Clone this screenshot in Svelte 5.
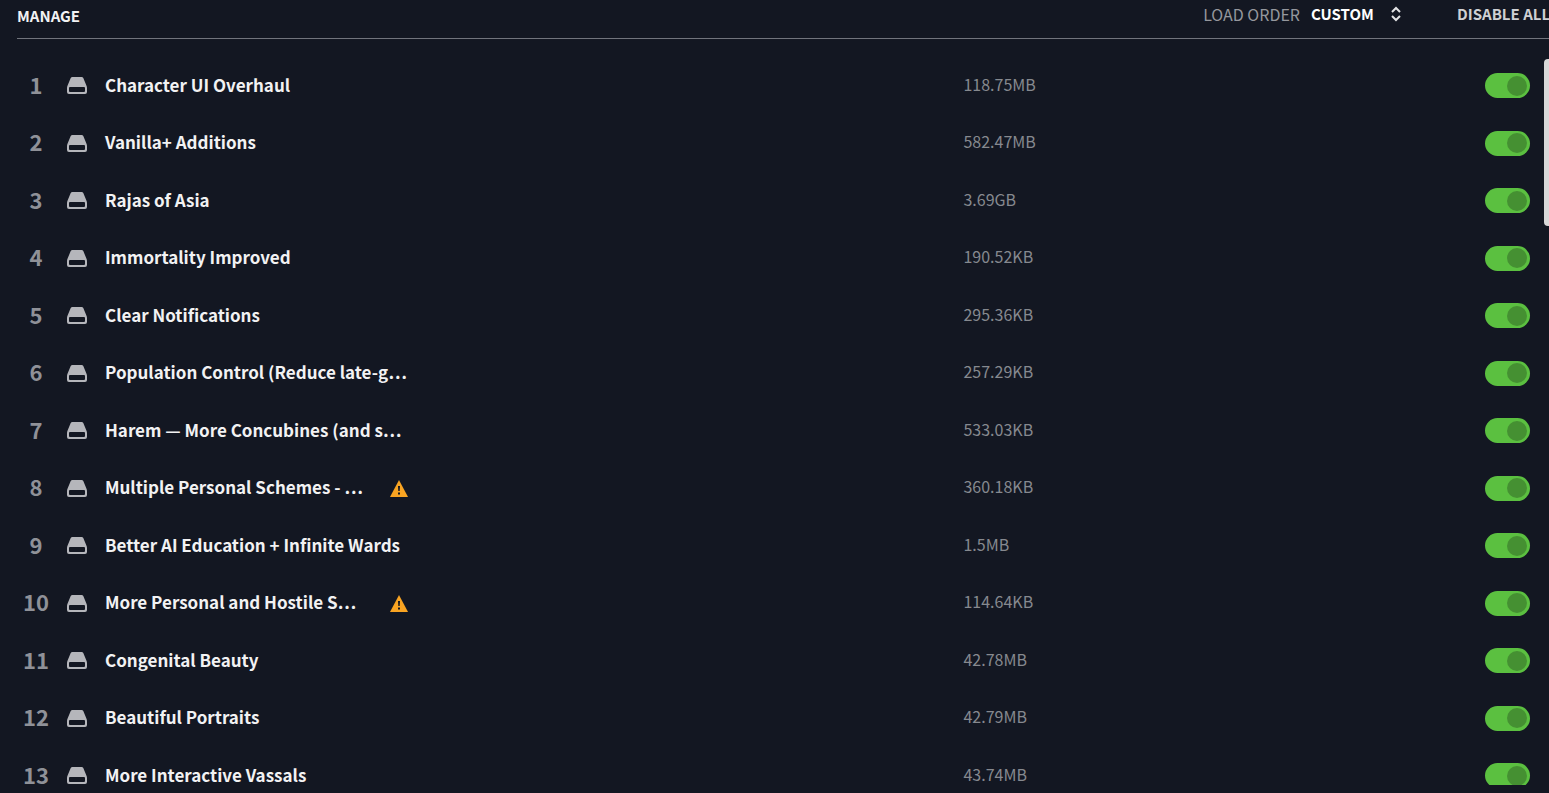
<script>
  let order = $state('CUSTOM');
  let mods = $state([
    { name: 'Character UI Overhaul', size: '118.75MB' },
    { name: 'Vanilla+ Additions', size: '582.47MB' },
    { name: 'Rajas of Asia', size: '3.69GB' },
    { name: 'Immortality Improved', size: '190.52KB' },
    { name: 'Clear Notifications', size: '295.36KB' },
    { name: 'Population Control (Reduce late-g…', size: '257.29KB' },
    { name: 'Harem — More Concubines (and s…', size: '533.03KB' },
    { name: 'Multiple Personal Schemes - …', size: '360.18KB', warning: true },
    { name: 'Better AI Education + Infinite Wards', size: '1.5MB' },
    { name: 'More Personal and Hostile S…', size: '114.64KB', warning: true },
    { name: 'Congenital Beauty', size: '42.78MB' },
    { name: 'Beautiful Portraits', size: '42.79MB' },
    { name: 'More Interactive Vassals', size: '43.74MB' }
  ].map((m) => ({ ...m, enabled: true })));

  function disableAll() {
    for (const m of mods) m.enabled = false;
  }
</script>

<main>
  <header>
    <h1>MANAGE</h1>
    <div class="order">
      <label for="load-order">LOAD ORDER</label>
      <select id="load-order" bind:value={order}>
        <option>CUSTOM</option>
      </select>
      <svg class="sort" viewBox="0 0 12 16" aria-hidden="true">
        <path d="M2 6 6 2l4 4M2 10l4 4 4-4" />
      </svg>
    </div>
    <button type="button" onclick={disableAll}>DISABLE ALL</button>
  </header>

  <div class="body">
    <ol>
      {#each mods as mod, i}
        <li>
          <span class="index">{i + 1}</span>
          <svg class="drive" viewBox="0 0 20 17" aria-hidden="true">
            <path fill-rule="evenodd" d="M5.400 0h9.200q1.200 0 1.700 1.100L19.400 8.500q.6 1.200.6 2.500V15q0 2-2 2H2q-2 0-2-2v-4q0-1.300.6-2.500L3.700 1.100Q4.200 0 5.400 0ZM3 10q-1 0-1 1v3q0 1 1 1h14q1 0 1-1v-3q0-1-1-1Z" />
          </svg>
          <div class="title">
            <label for="mod-{i}" class:flagged={mod.warning}>{mod.name}</label>
            {#if mod.warning}
              <svg class="warning" viewBox="0 0 18 17" role="img" aria-label="Warning">
                <path class="sign" d="M9 0 18 17H0Z" />
                <path class="mark" d="M8 6h2l-.3 5H8.300ZM8 12.500h2v2H8Z" />
              </svg>
            {/if}
          </div>
          <span class="size">{mod.size}</span>
          <input id="mod-{i}" type="checkbox" role="switch" bind:checked={mod.enabled} />
        </li>
      {/each}
    </ol>
    <div class="track"><div class="thumb"></div></div>
  </div>
</main>

<style>
  :global(body) {
    background: #131722;
  }
  main {
    box-sizing: border-box;
    height: 100vh;
    padding: 0 0 8px 17px;
    display: flex;
    flex-direction: column;
    overflow: hidden;
    color: #f2f2f3;
    font-family: "Noto Sans CJK SC", "Noto Sans", sans-serif;
    font-size: 16px;
    line-height: 24px;
  }
  header {
    flex: none;
    box-sizing: border-box;
    height: 39px;
    display: flex;
    align-items: flex-start;
    border-bottom: 1px solid #71747c;
    white-space: nowrap;
    font-size: 15px;
  }
  h1 {
    margin: 0;
    padding-top: 4px;
    flex: 1;
    font-size: 15px;
    font-weight: 700;
  }
  .order {
    display: flex;
    align-items: center;
    padding-top: 2px;
    margin-right: 55px;
  }
  .order label {
    color: #95979d;
    margin-right: 11px;
    font-size: 16px;
  }
  select {
    appearance: none;
    border: 0;
    padding: 0;
    margin-right: 16px;
    background: none;
    color: #fff;
    font: inherit;
    font-weight: 700;
  }
  .sort {
    width: 12px;
    height: 16px;
    fill: none;
    stroke: #e4e4e6;
    stroke-width: 2;
  }
  header button {
    width: 92px;
    padding: 2px 0 0;
    border: 0;
    background: none;
    color: #cfd0d3;
    font: inherit;
    font-weight: 700;
    text-align: left;
  }
  .body {
    flex: 1;
    min-height: 0;
    display: flex;
    overflow: hidden;
  }
  ol {
    flex: 1;
    margin: 0;
    padding: 18px 14px 0 0;
    list-style: none;
  }
  li {
    height: 57px;
    display: grid;
    grid-template-columns: 38px 38px minmax(0, 860fr) minmax(0, 528fr) 45px;
    align-items: center;
  }
  li:nth-child(even) {
    height: 58px;
  }
  .index {
    padding-bottom: 4px;
    color: #8f9198;
    font-size: 22px;
    font-weight: 700;
    text-align: center;
  }
  .drive {
    margin-left: 12px;
    width: 20px;
    height: 17px;
    fill: #b5b6bb;
  }
  .title {
    padding-left: 12px;
    display: flex;
    align-items: center;
    gap: 20px;
    font-size: 17px;
    font-weight: 700;
    white-space: nowrap;
  }
  .title label {
    padding-bottom: 2px;
  }
  .flagged {
    width: 265px;
  }
  .warning {
    width: 18px;
    height: 17px;
  }
  .sign {
    fill: #f9a422;
  }
  .mark {
    fill: #131722;
  }
  .size {
    padding: 0 0 4px 8px;
    color: #86898f;
  }
  input {
    appearance: none;
    display: flex;
    align-items: center;
    margin: 0;
    width: 45px;
    height: 25px;
    padding: 0 3px;
    border-radius: 13px;
    background: #575a63;
  }
  input::before {
    content: "";
    width: 20px;
    height: 20px;
    border-radius: 50%;
    background: #3d4049;
  }
  input:checked {
    justify-content: flex-end;
    background: #5bc040;
  }
  input:checked::before {
    background: #459032;
  }
  .track {
    flex: none;
    width: 5px;
    padding-top: 20px;
  }
  .thumb {
    height: 167px;
    border-radius: 4px 0 0 4px;
    background: #d9d9d9;
  }
</style>
